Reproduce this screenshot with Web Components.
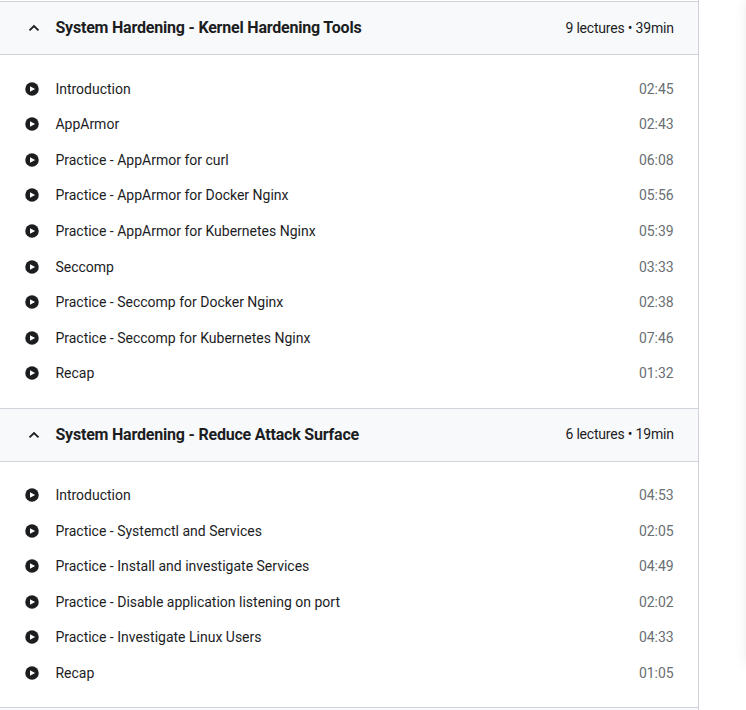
<!DOCTYPE html>
<html lang="en">
<head>
<meta charset="utf-8">
<title>Course content</title>
<style>
html,body{margin:0;height:100%;overflow:hidden;background:#fff}
body{font-family:Roboto,"Liberation Sans",sans-serif;color:#1c1d1f}
</style>
</head>
<body>
<course-page></course-page>
<script>
class PlayIcon extends HTMLElement{
  constructor(){super();this.attachShadow({mode:'open'}).innerHTML=`
<style>:host{display:block;width:14px;height:14px}svg{display:block}</style>
<svg width="14" height="14" viewBox="0 0 14 14"><circle cx="7" cy="7" r="6.75" fill="#1c1d1f"/><path d="M5 4.2v5.6L10.1 7z" fill="#fff"/></svg>`;}
}
customElements.define('play-icon',PlayIcon);

class LectureRow extends HTMLElement{
  constructor(){super();this.attachShadow({mode:'open'}).innerHTML=`
<style>
:host{display:flex;align-items:center;height:35.546875px;padding:0 24.25px 0 25px;font-size:14px;line-height:20px}
play-icon{flex:none;margin-right:16.4px}
.name{flex:1;white-space:nowrap}
.time{color:#6a6f73}
</style>
<play-icon></play-icon><span class="name"><slot></slot></span><span class="time"><slot name="time"></slot></span>`;}
}
customElements.define('lecture-row',LectureRow);

class CourseSection extends HTMLElement{
  constructor(){super();this.attachShadow({mode:'open'}).innerHTML=`
<style>
:host{display:block}
header{display:flex;align-items:center;box-sizing:border-box;height:54px;padding:0 24.25px 0 28px;background:#f7f9fb;border-top:1px solid #d1d3dc;border-bottom:1px solid #d1d3dc}
svg{flex:none;margin-right:15.4px}
h3{flex:1;margin:0;font-size:16px;line-height:20px;font-weight:700;letter-spacing:-.2px;white-space:nowrap}
.meta{font-size:14px;line-height:20px;margin-bottom:.25px;letter-spacing:-.2px;white-space:nowrap}
.list{padding:16px 0 16.578125px}
</style>
<header><svg width="12" height="8" viewBox="0 0 12 8"><path d="M1.5 6.4 6 2l4.5 4.4" fill="none" stroke="#1c1d1f" stroke-width="1.8"/></svg><h3><slot name="title"></slot></h3><span class="meta"><slot name="meta"></slot></span></header>
<div class="list"><slot></slot></div>`;}
}
customElements.define('course-section',CourseSection);

const sections=[
 ['System Hardening - Kernel Hardening Tools','9 lectures • 39min',[
  ['Introduction','02:45'],['AppArmor','02:43'],['Practice - AppArmor for curl','06:08'],
  ['Practice - AppArmor for Docker Nginx','05:56'],['Practice - AppArmor for Kubernetes Nginx','05:39'],
  ['Seccomp','03:33'],['Practice - Seccomp for Docker Nginx','02:38'],
  ['Practice - Seccomp for Kubernetes Nginx','07:46'],['Recap','01:32']]],
 ['System Hardening - Reduce Attack Surface','6 lectures • 19min',[
  ['Introduction','04:53'],['Practice - Systemctl and Services','02:05'],
  ['Practice - Install and investigate Services','04:49'],['Practice - Disable application listening on port','02:02'],
  ['Practice - Investigate Linux Users','04:33'],['Recap','01:05']]]
];
class CoursePage extends HTMLElement{
  constructor(){super();this.attachShadow({mode:'open'}).innerHTML=`
<style>
:host{display:flex;justify-content:space-between;height:710px;overflow:hidden}
main{box-sizing:border-box;width:699px;height:710px;padding-top:1px;border-right:1px solid #d1d3dc;overflow:hidden}
.next{height:20px;border-top:1px solid #d1d3dc;background:#f7f9fb}
aside{width:12px;height:676px;overflow:hidden;display:flex;justify-content:flex-end}
.card{flex:none;width:40px;height:664px;margin-right:-40px;box-shadow:0 0 12px rgba(0,0,0,.08)}
</style>
<main>${sections.map(([t,m,l])=>`<course-section><span slot="title">${t}</span><span slot="meta">${m}</span>${l.map(([n,d])=>`<lecture-row>${n}<span slot="time">${d}</span></lecture-row>`).join('')}</course-section>`).join('')}<div class="next"></div></main>
<aside><div class="card"></div></aside>`;}
}
customElements.define('course-page',CoursePage);
</script>
</body>
</html>
